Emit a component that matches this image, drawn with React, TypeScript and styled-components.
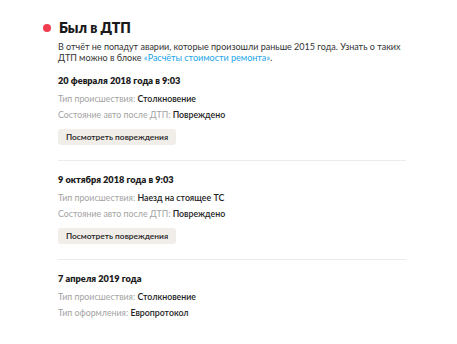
import React from 'react';
import styled, { createGlobalStyle } from 'styled-components';

const GlobalStyle = createGlobalStyle`
  html, body {
    margin: 0;
    padding: 0;
    background: #fff;
  }
  body {
    font-family: Lato, "Noto Sans", sans-serif;
    color: #222;
  }
`;

type Field = { label: string; value: string };

type Accident = {
  date: string;
  fields: Field[];
  damage?: boolean;
};

const accidents: Accident[] = [
  {
    date: '20 февраля 2018 года в 9:03',
    fields: [
      { label: 'Тип происшествия:', value: 'Столкновение' },
      { label: 'Состояние авто после ДТП:', value: 'Повреждено' },
    ],
    damage: true,
  },
  {
    date: '9 октября 2018 года в 9:03',
    fields: [
      { label: 'Тип происшествия:', value: 'Наезд на стоящее ТС' },
      { label: 'Состояние авто после ДТП:', value: 'Повреждено' },
    ],
    damage: true,
  },
  {
    date: '7 апреля 2019 года',
    fields: [
      { label: 'Тип происшествия:', value: 'Столкновение' },
      { label: 'Тип оформления:', value: 'Европротокол' },
    ],
  },
];

export default function App() {
  return (
    <>
      <GlobalStyle />
      <Page>
        <Header>
          <Dot />
          <Title>Был в ДТП</Title>
        </Header>
        <Content>
          <Description>
            В отчёт не попадут аварии, которые произошли раньше 2015 года. Узнать о таких
            ДТП можно в блоке <Link>«Расчёты стоимости ремонта»</Link>.
          </Description>
          <List>
            {accidents.map((item, i) => (
              <Item key={item.date} last={i === accidents.length - 1}>
                <DateTitle>{item.date}</DateTitle>
                {item.fields.map(f => (
                  <Row key={f.label}>
                    <Label>{f.label}</Label> <Value>{f.value}</Value>
                  </Row>
                ))}
                {item.damage ? <Button>Посмотреть повреждения</Button> : null}
              </Item>
            ))}
          </List>
        </Content>
      </Page>
    </>
  );
}

const Page = styled.div`
  width: 457px;
  height: 344px;
  box-sizing: border-box;
  padding: 19px 51px 0 43px;
  overflow: hidden;
`;

const Header = styled.div`
  display: flex;
  align-items: center;
  gap: 8px;
`;

const Dot = styled.span`
  width: 8px;
  height: 8px;
  border-radius: 50%;
  background: #f23c4f;
  flex-shrink: 0;
`;

const Title = styled.h2`
  margin: 0;
  font-size: 14px;
  line-height: 18px;
  font-weight: 800;
  color: #1a1a1a;
`;

const Content = styled.div`
  padding-left: 15px;
`;

const Description = styled.p`
  margin: 4px 0 0;
  font-size: 9px;
  line-height: 11px;
  color: #333;
`;

const Link = styled.span`
  color: #21a5e8;
`;

const List = styled.div`
  margin-top: 6px;
`;

const Item = styled.div<{ last?: boolean }>`
  padding: 6px 0 ${props => (props.last ? '0' : '15px')};
  border-bottom: ${props => (props.last ? 'none' : '1px solid #ebebeb')};
  & + & {
    padding-top: 13px;
  }
`;

const DateTitle = styled.div`
  font-size: 9.2px;
  line-height: 12px;
  font-weight: 800;
  color: #1a1a1a;
  margin-bottom: 4px;
`;

const Row = styled.div`
  font-size: 8.8px;
  line-height: 16px;
`;

const Label = styled.span`
  color: #a3a3a3;
`;

const Value = styled.span`
  color: #222;
  font-weight: 600;
`;

const Button = styled.button`
  display: block;
  margin-top: 6px;
  height: 16px;
  width: 118px;
  padding: 0;
  border: none;
  border-radius: 3px;
  background: #f1eee9;
  color: #222;
  font-family: Lato, "Noto Sans", sans-serif;
  font-size: 8.4px;
  font-weight: 600;
  cursor: pointer;
`;
